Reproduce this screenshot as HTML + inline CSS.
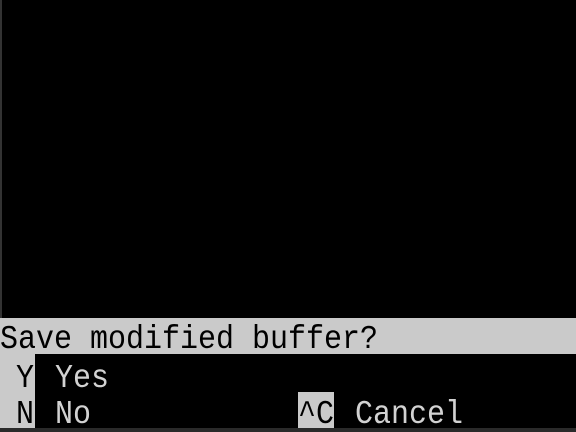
<!DOCTYPE html>
<html><head><style>
html,body{margin:0;padding:0;background:#000;width:576px;height:432px;overflow:hidden;position:relative}
.t{position:absolute;font-family:"Liberation Mono","DejaVu Sans Mono",monospace;font-size:30px;line-height:36px;height:36px;color:#d2d2d2;white-space:pre;transform:scaleY(1.12);transform-origin:0 50%}
.b{position:absolute;background:#cacaca}
</style></head><body>
<div style="position:absolute;left:0;top:0;width:2px;height:432px;background:#333"></div>
<div class="b" style="left:0;top:318px;width:576px;height:36px"></div>
<div class="b" style="left:0;top:354px;width:35px;height:74px"></div>
<div class="b" style="left:298px;top:392px;width:36px;height:36px"></div>
<div style="position:absolute;left:0;top:428px;width:576px;height:4px;background:#2a2a2a"></div>
<div class="t" style="left:0;top:322px;color:#000">Save modified buffer?</div>
<div class="t" style="left:16px;top:361px;color:#000">Y</div>
<div class="t" style="left:55px;top:361px">Yes</div>
<div class="t" style="left:16px;top:397px;color:#000">N</div>
<div class="t" style="left:55px;top:397px">No</div>
<div class="t" style="left:298px;top:397px;color:#000">^C</div>
<div class="t" style="left:355px;top:397px">Cancel</div>
</body></html>
